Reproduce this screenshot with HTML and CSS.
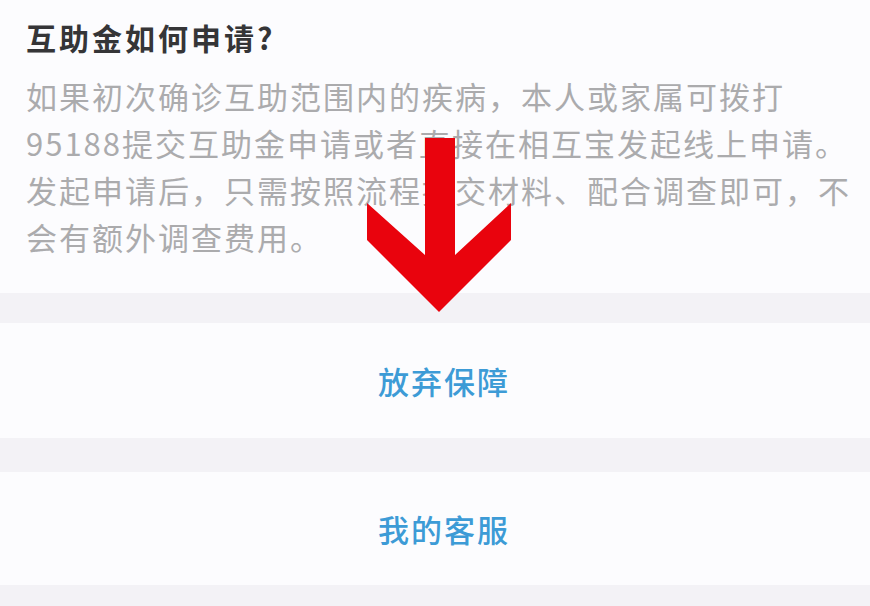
FILE: index.html
```html
<!DOCTYPE html>
<html lang="zh-CN">
<head>
    <meta charset="UTF-8">
    <meta name="viewport" content="width=device-width, initial-scale=1.0">
    <title>互助金如何申请</title>
    <link rel="stylesheet" href="styles.css">
</head>
<body>
    <div class="page">
        <section class="faq">
            <h2 class="faq-title">互助金如何申请?</h2>
            <p class="faq-text">如果初次确诊互助范围内的疾病，本人或家属可拨打95188提交互助金申请或者直接在相互宝发起线上申请。发起申请后，只需按照流程提交材料、配合调查即可，不会有额外调查费用。</p>
        </section>

        <div class="action first">放弃保障</div>
        <div class="action">我的客服</div>

        <!-- red arrow pointing at the button -->
        <svg class="arrow" width="150" height="180" viewBox="0 0 150 180">
            <polygon points="59,0 89,0 89,117 145,65 145,102 73,174 1,102 1,65 59,117" fill="#e9030d"/>
        </svg>
    </div>
</body>
</html>
```

FILE: styles.css
```css
body {
    margin: 0;
    background: #f3f2f6;
    font-family: "Noto Sans CJK SC", "Noto Sans", sans-serif;
}
.page {
    position: relative;
    width: 870px;
    height: 606px;
    overflow: hidden;
    display: flex;
    flex-direction: column;
}
.faq {
    background: #fcfcfe;
    padding: 17px 8px 33px 26px;
}
.faq-title {
    margin: 0;
    font-size: 30px;
    line-height: 40px;
    letter-spacing: 3px;
    font-weight: bold;
    color: #353537;
}
.faq-text {
    margin: 15px 0 0;
    font-size: 31px;
    line-height: 47px;
    letter-spacing: 2px;
    color: #ababad;
}
.action {
    background: #fcfcfe;
    height: 113px;
    display: flex;
    align-items: center;
    justify-content: center;
    margin-top: 34px;
    padding-left: 18px;
    font-size: 31px;
    font-weight: 500;
    letter-spacing: 2px;
    color: #3d9bd6;
}
.action.first {
    height: 115px;
    margin-top: 30px;
}
.arrow {
    position: absolute;
    left: 366px;
    top: 138px;
}
```
